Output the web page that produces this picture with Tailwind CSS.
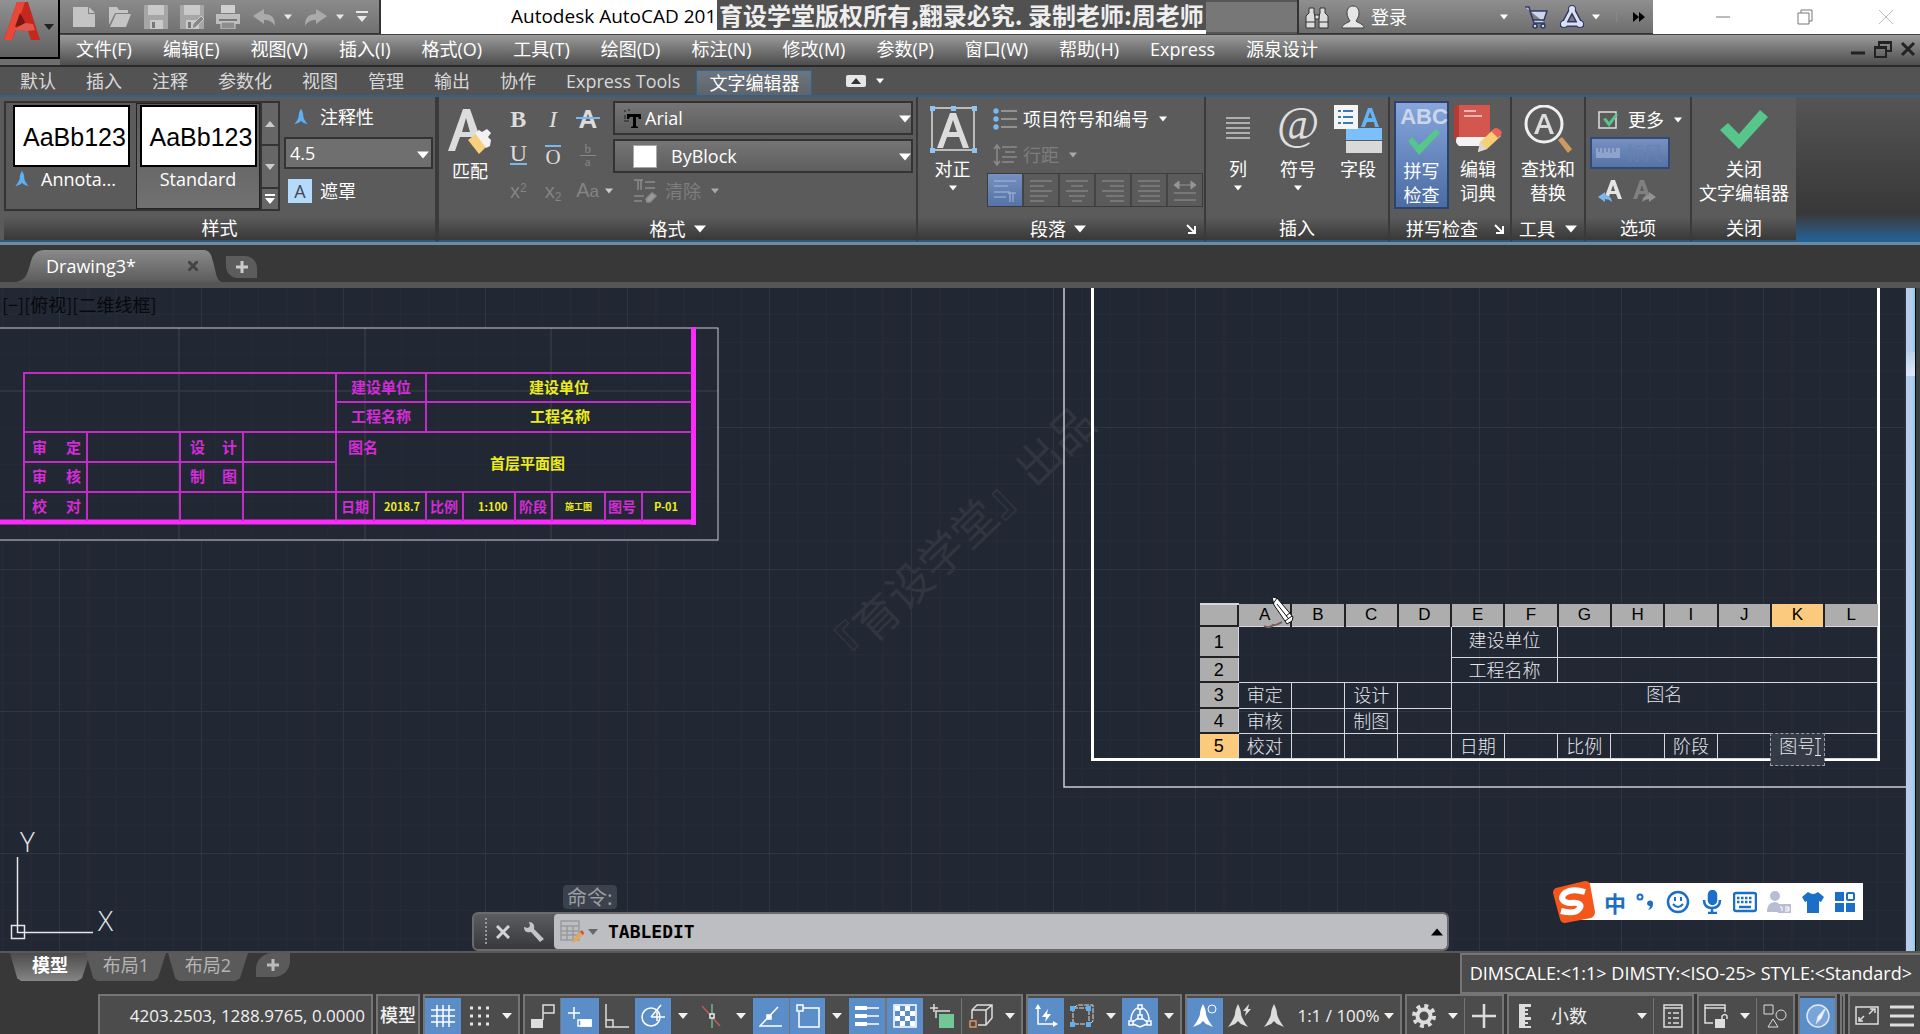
<!DOCTYPE html>
<html lang="zh-CN">

<head>
    <meta charset="UTF-8">
    <meta name="viewport" content="width=device-width, initial-scale=1.0">
    <title>Autodesk AutoCAD</title>
    <script src="https://cdn.jsdelivr.net/npm/@tailwindcss/browser@4"></script>
</head>

<body class="h-screen flex flex-col overflow-hidden bg-[#383838] text-white text-[18px] leading-6 whitespace-nowrap font-['Open_Sans','Noto_Sans_CJK_SC',sans-serif]">
    <!-- Iconos compartidos -->
    <svg class="hidden">
        <symbol id="down" viewBox="0 0 10 6"><path d="M0 0h10L5 6z" fill="currentColor"/></symbol>
        <symbol id="up" viewBox="0 0 10 6"><path d="M0 6h10L5 0z" fill="currentColor"/></symbol>
        <symbol id="anno" viewBox="0 0 24 24"><path d="M12 1c2 3 3 6 3 9 0 3 1 5 6 12l-7-3-2-2-2 2-7 3c5-7 6-9 6-12 0-3 1-6 3-9z" fill="currentColor"/></symbol>
        <symbol id="launch" viewBox="0 0 10 10"><path d="M1 1l7 7M9 2v7H2" stroke="currentColor" stroke-width="2" fill="none"/></symbol>
    </svg>

    <!-- Cabecera: logo, barra rápida, título y menú -->
    <header class="flex shrink-0 h-[67px] border-b-2 border-[#2a2a2a]">
        <div class="w-[60px] bg-[#6f6f6f] shrink-0">
            <button aria-label="AutoCAD" class="flex w-full h-[59px] items-start border-r-2 border-b-2 border-black bg-linear-to-b from-[#929292] to-[#616161]">
                <svg class="w-11 h-[42px]" viewBox="0 0 44 42"><path d="M4 40L17 2h11l12 38h-9l-3-9-12-1-4 10z" fill="#c4281f"/><path d="M17 2h8L14 34l-2 6H4z" fill="#e8473a"/><path d="M20 13l-5 14 11-3z" fill="#7a1712"/><path d="M13 30l12-7 8 1 2 6-7 1z" fill="#e2574b"/></svg>
                <svg class="w-2.5 h-1.5 mt-6 text-[#222]"><use href="#down"/></svg>
            </button>
        </div>
        <div class="flex-1 flex flex-col min-w-0">
            <div class="flex h-[34px] bg-white text-black">
                <div class="flex w-[321px] shrink-0 items-center gap-3 pl-3 pr-2 border-b border-r-2 border-[#333] bg-linear-to-b from-[#8b8b8b] to-[#717171] text-[#e8e8e8]">
                    <button aria-label="新建"><svg class="size-6" viewBox="0 0 24 24" fill="#c4c4c4"><path d="M1 2h15v7h7v13H1z"/><path d="M17 2l6 6h-6z"/></svg></button>
                    <button aria-label="打开"><svg class="size-6" viewBox="0 0 24 24" fill="#c4c4c4"><path d="M1 2h8l2 3h9v3H7L1 20z"/><path d="M8 9h15l-5 13H2z"/></svg></button>
                    <button aria-label="保存"><svg class="size-6" viewBox="0 0 24 24"><path d="M0 0h24v24H0z" fill="#a6a6a6"/><path d="M4 0h16v10H4zM6 15h13v9H6z" fill="#c9c9c9"/><path d="M8 17h3v6H8z" fill="#777"/></svg></button>
                    <button aria-label="另存为"><svg class="size-6" viewBox="0 0 24 24"><path d="M0 0h24v24H0z" fill="#a6a6a6"/><path d="M4 0h16v10H4zM6 15h13v9H6z" fill="#c9c9c9"/><path d="M8 17h3v6H8z" fill="#777"/><path d="M12 24l1-5 8-8 3 3-8 8z" fill="#888" stroke="#ccc"/></svg></button>
                    <button aria-label="打印"><svg class="size-6" viewBox="0 0 24 24"><path d="M5 0h14v8H5z" fill="#cfcfcf"/><path d="M0 9h24v10H0z" fill="#bdbdbd"/><path d="M3 14h18v2H3z" fill="#777"/><path d="M5 17h14v7H5z" fill="#8d8d8d" stroke="#ccc"/></svg></button>
                    <button aria-label="放弃" class="flex items-center gap-2"><svg class="size-6" viewBox="0 0 24 24" fill="#aaa"><path d="M1 11L12 4v5c8 0 11 4 11 12-3-5-6-6-11-6v4z"/></svg><svg class="w-2 h-1.5"><use href="#down"/></svg></button>
                    <button aria-label="重做" class="flex items-center gap-2"><svg class="size-6" viewBox="0 0 24 24" fill="#aaa"><path d="M23 11L12 4v5C4 9 1 13 1 21c3-5 6-6 11-6v4z"/></svg><svg class="w-2 h-1.5"><use href="#down"/></svg></button>
                    <button aria-label="自定义"><svg class="w-3 h-3" viewBox="0 0 12 12" fill="currentColor"><path d="M0 0h12v2H0zM1 5h10l-5 6z"/></svg></button>
                </div>
                <div class="flex flex-1 pl-[130px] text-[19px] leading-8">
                    <span class="w-[206px] shrink-0">Autodesk AutoCAD 201</span>
                    <div class="h-[30px] px-0.5 bg-[#515151] text-[#eee] text-[24px] leading-[30px] font-bold font-['Noto_Sans_CJK_SC']">育设学堂版权所有,翻录必究. 录制老师:周老师</div>
                    <div class="flex-1 bg-[#777] border-y-2 border-[#555]"></div>
                </div>
                <div class="flex w-[356px] shrink-0 items-center pl-1.5 border-l-2 border-b border-[#333] bg-linear-to-b from-[#8f8f8f] to-[#6e6e6e] text-white">
                    <svg class="size-6" viewBox="0 0 24 24" fill="#dcdcdc" stroke="#333"><path d="M4 3h5v5l1 3v12H1V11l3-3zM15 3h5v5l3 3v12h-9V11l1-3zM1 17h9M14 17h9"/><path d="M10 10h4v4h-4z"/></svg>
                    <button class="flex flex-1 items-center ml-3 gap-1.5"><svg class="size-6" viewBox="0 0 24 24" fill="#e6e6e6" stroke="#444"><path d="M12 1c4 0 6 3 6 7s-2 6-3 8c2 2 8 3 8 7H1c0-4 6-5 8-7-1-2-3-4-3-8s2-7 6-7z"/></svg>登录<svg class="w-2 h-1.5 ml-auto"><use href="#down"/></svg></button>
                    <button aria-label="应用商店" class="ml-4"><svg class="size-6" viewBox="0 0 24 24" fill="#cfd6ea" stroke="#303a66" stroke-width="1.5"><path d="M1 2h4l1 4h17l-3 9H9l1 3h11M6 6l3 9"/><circle cx="11" cy="21" r="2"/><circle cx="19" cy="21" r="2"/></svg></button>
                    <button aria-label="A360" class="flex items-center gap-2 ml-3"><svg class="size-6" viewBox="0 0 24 24" fill="none" stroke="#303a66" stroke-width="6"><path d="M12 4l8 15H4z"/><circle cx="12" cy="4" r="1"/><circle cx="4" cy="19" r="1"/><circle cx="20" cy="19" r="1"/><path d="M12 4l8 15H4z" stroke="#dbe1f2" stroke-width="3"/><g fill="#dbe1f2" stroke="none"><circle cx="12" cy="4" r="3"/><circle cx="4" cy="19" r="3"/><circle cx="20" cy="19" r="3"/></g></svg><svg class="w-2 h-1.5"><use href="#down"/></svg></button>
                    <button aria-label="更多" class="ml-4 pl-4 pr-2 border-l border-[#888] text-black"><svg class="w-3 h-2.5" viewBox="0 0 12 10"><path d="M0 0l6 5-6 5zM6 0l6 5-6 5z"/></svg></button>
                </div>
                <div class="flex w-[267px] shrink-0 items-center justify-between pl-[62px] pr-[26px] text-[#777]">
                    <button aria-label="最小化"><svg class="size-4" viewBox="0 0 16 16"><path d="M1 8h14" stroke="currentColor"/></svg></button>
                    <button aria-label="还原"><svg class="size-4" viewBox="0 0 16 16" fill="none" stroke="currentColor"><path d="M1 4h11v11H1zM4 4V1h11v11h-3"/></svg></button>
                    <button aria-label="关闭"><svg class="size-4 text-[#bbb]" viewBox="0 0 16 16"><path d="M1 1l14 14M15 1L1 15" stroke="currentColor"/></svg></button>
                </div>
            </div>
            <nav class="flex flex-1 items-center gap-[31px] pl-4 pr-1 pb-0.5 border-t border-[#444] bg-linear-to-b from-[#9b9b9b] to-[#4e4e4e]">
                <a href="#">文件(F)</a>
                <a href="#">编辑(E)</a>
                <a href="#">视图(V)</a>
                <a href="#">插入(I)</a>
                <a href="#">格式(O)</a>
                <a href="#">工具(T)</a>
                <a href="#">绘图(D)</a>
                <a href="#">标注(N)</a>
                <a href="#">修改(M)</a>
                <a href="#">参数(P)</a>
                <a href="#">窗口(W)</a>
                <a href="#">帮助(H)</a>
                <a href="#">Express</a>
                <a href="#">源泉设计</a>
                <div class="flex ml-auto gap-2 items-center">
                    <button aria-label="最小化"><svg class="size-4" viewBox="0 0 16 16"><path d="M1 12h14" stroke="#222" stroke-width="3"/></svg></button>
                    <button aria-label="还原"><svg class="size-4.5" viewBox="0 0 18 18" fill="none" stroke="#222" stroke-width="2"><path d="M1 7h11v10H1zM5 6V2h12v9h-4M5 3h12M1 8h11"/></svg></button>
                    <button aria-label="关闭"><svg class="size-4" viewBox="0 0 16 16"><path d="M2 2l12 12M14 2L2 14" stroke="#222" stroke-width="3"/></svg></button>
                </div>
            </nav>
        </div>
    </header>

    <!-- Pestañas de la cinta -->
    <nav class="flex shrink-0 h-7 items-center gap-[30px] pl-5 bg-[#535353] text-[#d8d8d8]">
        <a href="#">默认</a>
        <a href="#">插入</a>
        <a href="#">注释</a>
        <a href="#">参数化</a>
        <a href="#">视图</a>
        <a href="#">管理</a>
        <a href="#">输出</a>
        <a href="#">协作</a>
        <a href="#">Express Tools</a>
        <a href="#" class="-ml-3.5 mt-0.5 px-3 border border-b-0 border-[#2f6391] bg-linear-to-b from-[#6c7680] to-[#5e646a] text-white">文字编辑器</a>
        <button aria-label="最小化功能区" class="flex items-center gap-2.5 ml-1"><svg class="w-5 h-3" viewBox="0 0 20 12"><rect width="20" height="12" rx="2" fill="#e6e6e6"/><path d="M5 9h10l-5-6z" fill="#333"/></svg><svg class="w-2 h-1.5 text-white"><use href="#down"/></svg></button>
    </nav>

    <!-- Cinta: editor de texto -->
    <div class="flex shrink-0 h-[150px] border-t-2 border-b-3 border-t-[#335f89] border-b-[#6d8ba0] bg-[#2a2a2a]">
        <section class="flex flex-col w-[437px] shrink-0 pl-1 border-r-2 border-b-2 border-[#2f587c] border-r-[#3a3a3a] bg-[#5b5b5b]">
            <div class="flex flex-1 pt-1">
                <div class="flex w-[276px] h-[110px] border-2 border-[#333]">
                    <button class="flex flex-col w-[130px] pt-0.5 pl-[7px]">
                        <span class="w-[117px] h-[62px] pl-2 border-2 border-black bg-white text-black text-[25px] leading-[60px] text-left overflow-hidden font-['Liberation_Sans']">AaBb123</span>
                        <span class="flex items-center gap-2.5 h-6"><svg class="size-[18px] text-[#5cb0f5]"><use href="#anno"/></svg>Annota...</span>
                    </button>
                    <button class="flex flex-col items-center w-[124px] pt-px border border-[#222] bg-linear-to-b from-[#5b5b5b] to-[#717171]">
                        <span class="w-[117px] h-[62px] pl-2 border-2 border-black bg-white text-black text-[25px] leading-[60px] text-left overflow-hidden font-['Liberation_Sans']">AaBb123</span>
                        <span class="h-6">Standard</span>
                    </button>
                    <div class="flex flex-col flex-1 border-l-2 border-[#333] bg-[#666]">
                        <button aria-label="上" class="flex flex-1 items-center justify-center border-b-2 border-[#333] text-[#ccc]"><svg class="w-2.5 h-1.5"><use href="#up"/></svg></button>
                        <button aria-label="下" class="flex flex-1 items-center justify-center border-b-2 border-[#333] text-[#ccc]"><svg class="w-2.5 h-1.5"><use href="#down"/></svg></button>
                        <button aria-label="展开" class="flex h-5 items-center justify-center"><svg class="w-2.5 h-2.5" viewBox="0 0 10 10"><path d="M0 0h10v2H0zM0 4h10l-5 6z" fill="#fff"/></svg></button>
                    </div>
                </div>
                <div class="flex flex-col ml-1 gap-1">
                    <button class="flex items-center gap-2.5 h-8 pl-2"><svg class="size-[18px] text-[#5cb0f5]"><use href="#anno"/></svg>注释性</button>
                    <div class="relative">
                        <select aria-label="文字高度" class="w-[149px] h-8 pl-1 leading-7 appearance-none border-2 border-[#333] bg-[#6f6f6f]">
                            <option>4.5</option>
                        </select>
                        <svg class="absolute right-1 top-3.5 w-3 h-2 pointer-events-none"><use href="#down"/></svg>
                    </div>
                    <button class="flex items-center gap-2 mt-1.5 pl-1"><span class="size-6 bg-[#b4dbfb] text-[#445] leading-6">A</span>遮罩</button>
                </div>
            </div>
            <h3 class="h-[23px] text-center leading-[23px] bg-linear-to-b from-[#5b5b5b] to-[#383838]">样式</h3>
        </section>

        <section class="flex flex-col w-[481px] shrink-0 border-x-2 border-b-2 border-[#2f587c] border-x-[#3a3a3a] bg-[#5b5b5b]">
            <div class="flex flex-1 pt-1">
                <button class="flex flex-col items-center w-[62px] pt-2 pb-6">
                    <svg class="w-11 h-[46px] mb-1" viewBox="0 0 44 46"><path d="M0 42L15 0h7l12 34-5 8-5-14H12L7 42zM14 23h8L18 9z" fill="#dcdcdc" fill-rule="evenodd"/><path d="M20 31l8-6 11 12-8 8z" fill="#f8cf7c"/><path d="M27 24l4-3 3 2 5-3 4 4-3 4 3 3-1 6-4 2z" fill="#f2f2f2"/></svg>
                    <span>匹配</span>
                </button>
                <div class="grid grid-cols-3 w-[104px] content-start text-[#dcdcdc] text-[24px] font-['Liberation_Serif']">
                    <button aria-label="粗体" class="h-9 font-bold">B</button>
                    <button aria-label="斜体" class="h-9 italic">I</button>
                    <button aria-label="删除线" class="h-9 flex justify-center items-center"><svg class="size-6 overflow-visible" viewBox="0 0 24 24"><text x="12" y="21" text-anchor="middle" font-size="26" font-weight="bold" fill="#dcdcdc" font-family="Liberation Sans">A</text><path d="M0 11h24" stroke="#78b8ee" stroke-width="2"/></svg></button>
                    <button aria-label="下划线" class="flex justify-center items-center h-9"><span class="h-5 leading-4 border-b-2 border-[#78b8ee]">U</span></button>
                    <button aria-label="上划线" class="flex justify-center items-center h-9"><span class="h-5 leading-5 border-t-2 border-[#78b8ee] text-[21px]">O</span></button>
                    <button aria-label="堆叠" class="flex flex-col justify-center items-center h-9 text-[13px] leading-3 text-[#888]"><span class="w-4 border-b border-[#888]">b</span><span>a</span></button>
                    <button class="h-9 leading-7 text-[#848484] font-['Liberation_Sans'] text-[20px]">x<sup class="text-[12px] leading-none">2</sup></button>
                    <button class="h-9 leading-7 text-[#848484] font-['Liberation_Sans'] text-[20px]">x<sub class="text-[12px] leading-none">2</sub></button>
                    <button class="h-9 leading-7 text-[#848484] font-['Liberation_Sans'] text-[20px]">A<span class="text-[17px]">a</span></button>
                </div>
                <div class="flex flex-col gap-1">
                    <div class="relative ml-2">
                        <select aria-label="字体" class="w-[300px] h-[34px] pl-[30px] leading-[30px] appearance-none border-2 border-[#333] bg-linear-to-b from-[#757575] to-[#5e5e5e]">
                            <option>Arial</option>
                        </select>
                        <svg class="absolute left-2.5 top-2 w-[18px] h-[20px]" viewBox="0 0 18 20"><path d="M1 2h2M5 1h2M2 6v4M1 12h5" stroke="#444" stroke-width="2"/><path d="M4 5h14v5h-2l-1-2h-2v9l2 1v1H8v-1l2-1V8H7l-1 2H4z"/></svg>
                        <svg class="absolute right-0.5 top-3.5 w-3 h-2 pointer-events-none"><use href="#down"/></svg>
                    </div>
                    <div class="relative ml-2">
                        <select aria-label="颜色" class="w-[300px] h-[34px] pl-[56px] leading-[30px] appearance-none border-2 border-[#333] bg-linear-to-b from-[#757575] to-[#5e5e5e]">
                            <option>ByBlock</option>
                        </select>
                        <span class="absolute left-5 top-1.5 w-6 h-[23px] bg-white border border-[#aaa]"></span>
                        <svg class="absolute right-0.5 top-3.5 w-3 h-2 pointer-events-none"><use href="#down"/></svg>
                    </div>
                    <button class="flex items-center h-7 text-[#7e7e7e]"><svg class="w-2 h-1.5 mr-5 text-[#ccc]"><use href="#down"/></svg><svg class="size-6 mr-2" viewBox="0 0 24 24" stroke="#8c8c8c" stroke-width="1.500" fill="none"><path d="M1 1h9M5 1v10M8 1v10M12 3h10M12 9h10M1 17h10M1 22h8"/><path d="M13 20l6-6 4 3-6 6h-3z" fill="#999"/></svg>清除<svg class="w-2 h-1.5 ml-2.5 text-[#aaa]"><use href="#down"/></svg></button>
                </div>
            </div>
            <h3 class="flex items-center justify-center gap-2 h-[23px] bg-linear-to-b from-[#5b5b5b] to-[#383838]">格式<svg class="w-3 h-2"><use href="#down"/></svg></h3>
        </section>

        <section class="flex flex-col w-[288px] shrink-0 border-r-2 border-b-2 border-[#2f587c] border-r-[#3a3a3a] bg-[#5b5b5b]">
            <div class="flex flex-1 pt-1">
                <button class="flex flex-col items-center w-[69px] pt-1">
                    <svg class="w-12 h-12 mb-1" viewBox="0 0 48 48"><path d="M3 3h42v42H3z" fill="none" stroke="#ddd" stroke-width="1.500"/><path d="M8 43L21 8h6l13 35h-6l-4-11H18l-4 11zM20 27h8l-4-12z" fill="#dcdcdc" fill-rule="evenodd"/><path d="M1 1h5v5H1zM22 1h5v5h-5zM43 1h5v5h-5zM1 43h5v5H1zM43 43h5v5h-5z" fill="#8cc4f5"/></svg>
                    <span>对正</span>
                    <svg class="w-2 h-1.5 mt-1"><use href="#down"/></svg>
                </button>
                <div class="flex flex-col">
                    <button class="flex items-center gap-1.5 h-9 pl-1.5"><svg class="size-6" viewBox="0 0 24 24" stroke="#ccc"><path d="M8 4h16M8 12h16M8 20h16"/><g fill="#78b8ee" stroke="none"><circle cx="3" cy="4" r="2.700"/><circle cx="3" cy="12" r="2.700"/><circle cx="3" cy="20" r="2.700"/></g></svg>项目符号和编号<svg class="w-2 h-1.5 ml-1"><use href="#down"/></svg></button>
                    <button class="flex items-center gap-1.5 h-9 pl-1.5 text-[#7e7e7e]"><svg class="size-6" viewBox="0 0 24 24" stroke="#8c8c8c" stroke-width="1.500" fill="none"><path d="M4 2v20M1 6l3-4 3 4M1 18l3 4 3-4M9 4h15M12 9h10M9 14h15M9 19h12"/></svg>行距<svg class="w-2 h-1.5 ml-1 text-[#aaa]"><use href="#down"/></svg></button>
                    <div class="flex border border-[#3c3c3c] divide-x-2 divide-[#444] text-[#959595]">
                        <button aria-label="默认" class="p-1 px-[5px] bg-linear-to-b from-[#7690c0] to-[#5573a6]"><svg class="size-6" viewBox="0 0 24 24" stroke="#a9bbdb"><path d="M1 3h22M1 8h14M1 14h16M1 19h12M17 15v9M20 15v9M23 15h-8"/></svg></button>
                        <button aria-label="左对齐" class="p-1 px-[5px]"><svg class="size-6" viewBox="0 0 24 24" stroke="currentColor"><path d="M1 3h22M1 8h14M1 13h22M1 18h18M1 23h14"/></svg></button>
                        <button aria-label="居中" class="p-1 px-[5px]"><svg class="size-6" viewBox="0 0 24 24" stroke="currentColor"><path d="M1 3h22M6 8h12M1 13h22M4 18h16M7 23h10"/></svg></button>
                        <button aria-label="右对齐" class="p-1 px-[5px]"><svg class="size-6" viewBox="0 0 24 24" stroke="currentColor"><path d="M1 3h22M9 8h14M1 13h22M5 18h18M9 23h14"/></svg></button>
                        <button aria-label="对正" class="p-1 px-[5px]"><svg class="size-6" viewBox="0 0 24 24" stroke="currentColor"><path d="M1 3h22M3 8h20M1 13h22M3 18h20M1 23h22"/></svg></button>
                        <button aria-label="分散对齐" class="p-1 px-[5px]"><svg class="size-6" viewBox="0 0 24 24" stroke="currentColor" fill="currentColor"><path d="M2 7h20M1 15h22M1 22h22"/><path d="M6 3L1 7l5 4zM18 3l5 4-5 4z"/></svg></button>
                    </div>
                </div>
            </div>
            <h3 class="flex items-center h-[23px] pl-3 pr-2 bg-linear-to-b from-[#5b5b5b] to-[#383838]"><span class="ml-auto mr-2">段落</span><svg class="w-3 h-2"><use href="#down"/></svg><svg class="size-2.5 ml-auto"><use href="#launch"/></svg></h3>
        </section>

        <section class="flex flex-col w-[184px] shrink-0 border-r-2 border-b-2 border-[#2f587c] border-r-[#3a3a3a] bg-[#5b5b5b]">
            <div class="grid grid-cols-3 flex-1 pt-2 pl-0.5">
                <button class="flex flex-col items-center">
                    <svg class="w-6 h-12 mb-1" viewBox="0 0 24 48" stroke="#ccc" stroke-width="1.500"><path d="M0 13h24M0 18h24M0 23h24M0 28h24M0 33h24"/></svg>
                    <span>列</span>
                    <svg class="w-2 h-1.5 mt-1"><use href="#down"/></svg>
                </button>
                <button class="flex flex-col items-center">
                    <svg class="w-12 h-12 mb-1 overflow-visible" viewBox="0 0 48 48"><text x="24" y="34" text-anchor="middle" font-size="46" font-style="italic" fill="#dedede" font-family="Liberation Serif">@</text></svg>
                    <span>符号</span>
                    <svg class="w-2 h-1.5 mt-1"><use href="#down"/></svg>
                </button>
                <button class="flex flex-col items-center">
                    <svg class="w-12 h-12 mb-1" viewBox="0 0 48 48"><path d="M12 23h36v12H12z" fill="#7cc0fb"/><path d="M12 36h36v12H12z" fill="#d9d9d9"/><path d="M0 0h24v24H0z" fill="#f4f4f4"/><path d="M9 6h10M9 12h10M9 18h10M4 6h3M4 12h3M4 18h3" stroke="#3b78b4" stroke-width="2"/><path d="M27 22l7-19h4l7 19h-4l-1-5h-7l-2 5zM34 13h4l-2-6z" fill="#63b3f6" fill-rule="evenodd"/></svg>
                    <span>字段</span>
                </button>
            </div>
            <h3 class="h-[23px] text-center leading-[23px] bg-linear-to-b from-[#5b5b5b] to-[#383838]">插入</h3>
        </section>

        <section class="flex flex-col w-[122px] shrink-0 border-r-2 border-b-2 border-[#2f587c] border-r-[#3a3a3a] bg-[#5b5b5b]">
            <div class="flex flex-1 pt-1 pl-1">
                <button class="flex flex-col items-center w-[55px] h-[108px] pt-1.5 border-2 border-[#2c4370] bg-linear-to-b from-[#86a6dd] to-[#4b6ba3]">
                    <svg class="w-12 h-12 mb-0.5 overflow-visible" viewBox="0 0 48 48"><text x="26" y="15" text-anchor="middle" font-size="22" font-weight="bold" fill="#ccd6ea" font-family="Liberation Sans">ABC</text><path d="M10 32l4-4 7 8 17-16 4 4-21 22z" fill="#56c68a"/></svg>
                    <span>拼写</span>
                    <span>检查</span>
                </button>
                <button class="flex flex-col items-center w-[58px] pt-1">
                    <svg class="w-12 h-12 mb-1" viewBox="0 0 48 48"><path d="M2 4q0-4 5-4h29v34H2z" fill="#d3574f"/><path d="M0 5q0-5 5-5v34H0z" fill="#b53b35"/><path d="M10 6h12M10 11h18" stroke="#f3d5d3" stroke-width="1.500"/><path d="M3 32h31v9H5q-5-4-2-9z" fill="#f3f3f3"/><path d="M24 47l2-10 14-13 7 7-14 13z" fill="#f8cf74"/><path d="M24 47l2-10 7 7z" fill="#d8d8d8"/><path d="M37 26l4-3q5 0 7 5l-4 5z" fill="#ee6258"/></svg>
                    <span>编辑</span>
                    <span>词典</span>
                </button>
            </div>
            <h3 class="flex items-center justify-between h-[23px] pl-4 pr-1.5 bg-linear-to-b from-[#5b5b5b] to-[#383838]">拼写检查<svg class="size-2.5"><use href="#launch"/></svg></h3>
        </section>

        <section class="flex flex-col w-[74px] shrink-0 border-r-2 border-b-2 border-[#2f587c] border-r-[#3a3a3a] bg-[#5b5b5b]">
            <button class="flex flex-col items-center flex-1 pt-2">
                <svg class="w-12 h-12 mb-1" viewBox="0 0 48 48"><path d="M34 35l4-3 10 12-4 4z" fill="#cf9a5e"/><circle cx="20" cy="19" r="18" fill="none" stroke="#f0f0f0" stroke-width="3"/><path d="M10 29L18 9h4l8 20h-4l-2-6h-8l-2 6zM17 20h6l-3-8z" fill="#dcdcdc" fill-rule="evenodd"/></svg>
                <span>查找和</span>
                <span>替换</span>
            </button>
            <h3 class="flex items-center justify-center gap-2.5 h-[23px] bg-linear-to-b from-[#5b5b5b] to-[#383838]">工具<svg class="w-3 h-2"><use href="#down"/></svg></h3>
        </section>

        <section class="flex flex-col w-[106px] shrink-0 border-r-2 border-b-2 border-[#2f587c] border-r-[#3a3a3a] bg-[#5b5b5b]">
            <div class="flex flex-col flex-1 pt-1.5 pl-1">
                <button class="flex items-center gap-2.5 h-[34px] pl-2"><svg class="w-5 h-[18px]" viewBox="0 0 20 18"><path d="M1 1h17v16H1z" fill="none" stroke="#ddd" stroke-width="1.500"/><path d="M5 8l3-1 3 4 7-9 2 2-9 12z" fill="#56c68a"/></svg>更多<svg class="w-2 h-1.5"><use href="#down"/></svg></button>
                <button class="flex items-center gap-1.5 w-20 h-8 pl-1 border-2 border-[#324a78] bg-linear-to-b from-[#7690c0] to-[#5573a6] text-[#6782b0]"><svg class="w-6 h-2.5" viewBox="0 0 24 10"><path d="M0 0h24v10H0z" fill="#8fa4ca"/><path d="M3 0v4M7 0v5M11 0v4M15 0v5M19 0v4" stroke="#5573a6"/></svg>标尺</button>
                <div class="flex gap-2.5 mt-2.5 pl-2">
                    <button aria-label="放弃"><svg class="size-6" viewBox="0 0 24 24"><path d="M6 20L13 1h4l7 19h-4l-2-5h-6l-2 5zM13 12h4l-2-6z" fill="#e4e4e4" fill-rule="evenodd"/><path d="M0 18l7-5v3q6 0 7 7-3-3-7-3v3z" fill="#78b8ee"/></svg></button>
                    <button aria-label="重做"><svg class="size-6" viewBox="0 0 24 24"><path d="M1 20L8 1h4l7 19h-4l-2-5H7l-2 5zM8 12h4l-2-6z" fill="#808080" fill-rule="evenodd"/><path d="M24 18l-7-5v3q-6 0-7 7 3-3 7-3v3z" fill="#929292"/></svg></button>
                </div>
            </div>
            <h3 class="h-[23px] text-center leading-[23px] bg-linear-to-b from-[#5b5b5b] to-[#383838]">选项</h3>
        </section>

        <section class="flex flex-col w-[104px] shrink-0 border-b-2 border-[#2f587c] bg-[#5b5b5b]">
            <button class="flex flex-col items-center flex-1 pt-2">
                <svg class="w-12 h-12 mb-1" viewBox="0 0 48 48"><path d="M0 25l8-7 11 11L40 5l8 7-29 32z" fill="#56c68a"/></svg>
                <span>关闭</span>
                <span>文字编辑器</span>
            </button>
            <h3 class="h-[23px] text-center leading-[23px] bg-linear-to-b from-[#5b5b5b] to-[#383838]">关闭</h3>
        </section>
        <div class="flex-1 bg-linear-to-b from-[#555] via-[#383838] via-80% to-[#1d639b]"></div>
    </div>

    <!-- Pestañas de archivo -->
    <div class="flex shrink-0 items-end h-[43px] pl-4 border-b-6 border-[#555] bg-[#383838]">
        <div class="relative flex items-center w-[206px] h-[33px] pl-[30px]">
            <svg class="absolute inset-0 w-full h-full" viewBox="0 0 206 33" preserveAspectRatio="none"><defs><linearGradient id="tab" x2="0" y2="1"><stop stop-color="#8a8a8a"/><stop offset="1" stop-color="#5c5c5c"/></linearGradient></defs><path d="M0 33C10 31 11 26 15 12Q18 1 28 1H188Q194 1 196 9C200 22 200 32 206 33z" fill="url(#tab)"/></svg>
            <a href="#" class="relative">Drawing3*</a>
            <button aria-label="关闭" class="relative ml-auto mr-6"><svg class="size-2.5" viewBox="0 0 10 10"><path d="M0 0l10 10M10 0L0 10" stroke="#444" stroke-width="3"/></svg></button>
        </div>
        <button aria-label="新图形" class="flex items-center justify-center w-[31px] h-[22px] mb-1 ml-1 rounded-tr-xl rounded-bl-xl bg-[#5c5c5c]"><svg class="size-3" viewBox="0 0 12 12"><path d="M6 0v12M0 6h12" stroke="#ccc" stroke-width="3"/></svg></button>
    </div>

    <!-- Lienzo de dibujo -->
    <main class="relative flex-1 overflow-hidden bg-[#212733]">
        <svg class="absolute inset-0 w-full h-full" font-family="Noto Sans CJK SC">
            <defs>
                <pattern id="grid" x="59" y="139" width="142" height="142" patternUnits="userSpaceOnUse">
                    <path d="M28.900 0v142M57.300 0v142M85.700 0v142M114.100 0v142M0 28.900h142M0 57.300h142M0 85.700h142M0 114.100h142" stroke="#262c38"/>
                    <path d="M.5 0v142M0 .5h142" stroke="#2f3642"/>
                </pattern>
                <pattern id="grid2" x="178" y="102" width="186" height="186" patternUnits="userSpaceOnUse">
                    <path d="M37.500 0v186M74.500 0v186M111.500 0v186M149.500 0v186M0 37.500h186M0 74.500h186M0 111.500h186M0 149.500h186" stroke="#252b36"/>
                    <path d="M1 0v186M0 1h186" stroke="#2f3540" stroke-width="2"/>
                </pattern>
            </defs>
            <rect width="100%" height="100%" fill="url(#grid)"/>

            <text transform="translate(840 388) rotate(-44)" font-size="45" fill="#30353f">『育设学堂』出品</text>

            <!-- Cajetín de referencia -->
            <rect x="-2" y="40" width="720" height="212" fill="#212733"/>
            <rect x="-2" y="40" width="720" height="212" fill="url(#grid2)" stroke="#c8ccd2"/>
            <path d="M0 234H694M693.500 39V237" stroke="#fb2bfb" stroke-width="5"/>
            <path d="M24 85H692M336 114H692M24 144H692M24 174H336M24 204H692M24 84V233M87 144V233M180 144V233M243 144V233M336 85V233M426 85V144M374 204V233M426 204V233M463 204V233M515 204V233M552 204V233M605 204V233M642 204V233" stroke="#c22bc5" stroke-width="2"/>
            <g font-size="15" font-weight="bold" fill="#d32bd6">
                <text x="351" y="105">建设单位</text>
                <text x="351" y="134">工程名称</text>
                <text x="348" y="165">图名</text>
                <text x="32" y="165">审</text><text x="66" y="165">定</text>
                <text x="32" y="194">审</text><text x="66" y="194">核</text>
                <text x="32" y="224">校</text><text x="66" y="224">对</text>
                <text x="190" y="165">设</text><text x="222" y="165">计</text>
                <text x="190" y="194">制</text><text x="222" y="194">图</text>
                <text x="341" y="224" font-size="14">日期</text>
                <text x="430" y="224" font-size="14">比例</text>
                <text x="519" y="224" font-size="14">阶段</text>
                <text x="608" y="224" font-size="14">图号</text>
            </g>
            <g font-size="15" font-weight="bold" fill="#ecec1c">
                <text x="529" y="105">建设单位</text>
                <text x="530" y="134">工程名称</text>
                <text x="490" y="181">首层平面图</text>
                <text x="384" y="223" font-size="11">2018.7</text>
                <text x="478" y="223" font-size="11">1:100</text>
                <text x="565" y="222" font-size="9">施工图</text>
                <text x="654" y="223" font-size="11">P-01</text>
            </g>

            <!-- Marco de la lámina -->
            <path d="M1064 0V499H1906" fill="none" stroke="#c8ccd2" stroke-width="1.500"/>
            <path d="M1092.500 0V471.500H1878.500V0" fill="none" stroke="#fff" stroke-width="3"/>

            <!-- Icono SCP -->
            <path d="M11.500 637.500h13v13h-13zM17.500 569V644.500H93" fill="none" stroke="#e4e6ea" stroke-width="1.500"/>
            <g font-family="Open Sans" font-weight="300" font-size="28" fill="#e4e6ea">
                <text x="20" y="564">Y</text>
                <text x="98" y="643">X</text>
            </g>
        </svg>

        <button class="absolute left-0.5 top-1 text-[#07090d] font-['Noto_Sans_CJK_SC']">[−][俯视][二维线框]</button>

        <table class="absolute left-[1200px] top-[315px] w-[678px] table-fixed border-collapse text-center leading-5 font-light text-[#e6e8ec] font-['Noto_Sans_CJK_SC']">
            <colgroup><col class="w-[38px]"><col span="12"></colgroup>
            <thead class="bg-[#adadad] text-black font-['Liberation_Sans'] text-[17px]">
                <tr class="h-[22px]">
                    <th class="border-t-2 border-[#d5d7e0]"></th>
                    <th class="font-normal border-l-2 border-[#222]">A</th>
                    <th class="font-normal border-l-2 border-[#222]">B</th>
                    <th class="font-normal border-l-2 border-[#222]">C</th>
                    <th class="font-normal border-l-2 border-[#222]">D</th>
                    <th class="font-normal border-l-2 border-[#222]">E</th>
                    <th class="font-normal border-l-2 border-[#222]">F</th>
                    <th class="font-normal border-l-2 border-[#222]">G</th>
                    <th class="font-normal border-l-2 border-[#222]">H</th>
                    <th class="font-normal border-l-2 border-[#222]">I</th>
                    <th class="font-normal border-l-2 border-[#222]">J</th>
                    <th class="font-normal border-l-2 border-[#222] bg-[#fcca7c]">K</th>
                    <th class="font-normal border-l-2 border-[#222]">L</th>
                </tr>
            </thead>
            <tbody>
                <tr class="h-[31px]">
                    <th class="font-normal bg-[#adadad] text-black border-y-2 border-y-[#222] font-['Liberation_Sans']">1</th>
                    <td class="border border-[#d5d8de]" colspan="4" rowspan="2"></td>
                    <td class="border border-[#d5d8de] pb-1.5" colspan="2">建设单位</td>
                    <td class="border border-[#d5d8de]" colspan="6"></td>
                </tr>
                <tr class="h-[25px]">
                    <th class="font-normal bg-[#adadad] text-black border-y-2 border-y-[#222] font-['Liberation_Sans']">2</th>
                    <td class="border border-[#d5d8de] pb-0.5" colspan="2">工程名称</td>
                    <td class="border border-[#d5d8de]" colspan="6"></td>
                </tr>
                <tr class="h-[26px]">
                    <th class="font-normal bg-[#adadad] text-black border-y-2 border-y-[#222] font-['Liberation_Sans']">3</th>
                    <td class="border border-[#d5d8de] pb-0.5">审定</td>
                    <td class="border border-[#d5d8de]"></td>
                    <td class="border border-[#d5d8de] pb-0.5">设计</td>
                    <td class="border border-[#d5d8de]"></td>
                    <td class="border border-[#d5d8de] align-top" colspan="8" rowspan="2">图名</td>
                </tr>
                <tr class="h-[25px]">
                    <th class="font-normal bg-[#adadad] text-black border-y-2 border-y-[#222] font-['Liberation_Sans']">4</th>
                    <td class="border border-[#d5d8de] pb-0.5">审核</td>
                    <td class="border border-[#d5d8de]"></td>
                    <td class="border border-[#d5d8de] pb-0.5">制图</td>
                    <td class="border border-[#d5d8de]"></td>
                </tr>
                <tr class="h-[25px]">
                    <th class="font-normal bg-[#fcca7c] text-black font-['Liberation_Sans']">5</th>
                    <td class="border border-[#d5d8de] pb-0.5">校对</td>
                    <td class="border border-[#d5d8de]"></td>
                    <td class="border border-[#d5d8de]"></td>
                    <td class="border border-[#d5d8de]"></td>
                    <td class="border border-[#d5d8de] pb-0.5">日期</td>
                    <td class="border border-[#d5d8de]"></td>
                    <td class="border border-[#d5d8de] pb-0.5">比例</td>
                    <td class="border border-[#d5d8de]"></td>
                    <td class="border border-[#d5d8de] pb-0.5">阶段</td>
                    <td class="border border-[#d5d8de]"></td>
                    <td class="border border-[#d5d8de] relative">
                        <input aria-label="单元格 K5" value="图号" class="absolute -left-px -top-px w-[55px] h-[33px] pl-2 pb-2 border border-dashed border-[#9a9fa8] bg-[#343a46]">
                        <svg class="absolute left-[43px] top-1 w-2 h-[18px]" viewBox="0 0 8 18"><path d="M1 .5h6M1 17.500h6M4 0v18" stroke="#e6e8ec"/></svg>
                    </td>
                    <td class="border border-[#d5d8de]"></td>
                </tr>
            </tbody>
        </table>

        <!-- Cursor de lápiz -->
        <svg class="absolute left-[1262px] top-[307px] w-8 h-9" viewBox="0 0 32 36"><path d="M2 31q5 3 9-1 2 1 9-3" fill="none" stroke="#7c5a5a" stroke-width="2"/><path d="M10 2l5 1 16 19-1 4-5 3L12 10z" fill="#fff" stroke="#111"/><path d="M15 3l-4 6M24 21l5-4M23 26l7-5M15 9l11 14" stroke="#111" fill="none"/></svg>

        <!-- Barra lateral derecha -->
        <div class="absolute right-0 inset-y-0 flex w-3.5 bg-[#3c4040]">
            <div class="w-2.5 bg-linear-to-r from-[#b7cdec] from-70% to-[#6fd0f0] border-r border-black"><div class="h-6 mt-16 bg-linear-to-b from-[#bcd2ef] to-[#dce8f7]"></div></div>
        </div>

        <!-- Línea de comandos -->
        <span class="absolute left-[563px] bottom-[42px] px-1 h-6 rounded bg-[#3b424c] text-[#9a9fa6] text-[20px] font-['Noto_Sans_CJK_SC']">命令:</span>
        <div class="absolute left-[472px] bottom-0 flex w-[977px] h-[39px] border-2 border-[#6b6b6d] rounded-md overflow-hidden bg-linear-to-b from-[#5b5d60] to-[#38393c]">
            <div class="flex items-center w-[80px] pl-2.5 gap-2">
                <svg class="w-1 h-7" viewBox="0 0 4 28"><path d="M2 0v28" stroke="#999" stroke-width="2" stroke-dasharray="2 2"/></svg>
                <button aria-label="关闭"><svg class="size-3.5" viewBox="0 0 14 14"><path d="M1 1l12 12M13 1L1 13" stroke="#d4d4d4" stroke-width="3"/></svg></button>
                <button aria-label="自定义" class="ml-1.5"><svg class="size-5" viewBox="0 0 20 20" fill="#c4c4c4"><path d="M5 0l1 4-2 2-4-1c0 5 4 6 7 5l9 10 4-3L10 7c1-4-1-7-5-7z"/></svg></button>
            </div>
            <div class="flex flex-1 items-center pl-1.5 pr-1 rounded bg-[#bdbec1] text-black">
                <svg class="w-6 h-6" viewBox="0 0 24 24" fill="none" stroke="#9a9a9c" stroke-width="1.500"><path d="M1 1h18v19H1zM1 6h18M1 11h18M1 15h18M7 6v14M13 6v14"/><path d="M12 23l2-5 7-7 3 3-7 7z" fill="#e2a95a" stroke="none"/><path d="M20 12l2-2 2 3-1 2z" fill="#d6453c" stroke="none"/></svg>
                <svg class="w-2.5 h-1.5 ml-1 text-[#666]"><use href="#down"/></svg>
                <input aria-label="命令行" value="TABLEDIT" class="flex-1 ml-2.5 font-bold text-[18px] font-['DejaVu_Sans_Mono'] outline-none">
                <button aria-label="历史记录"><svg class="w-3 h-2"><use href="#up"/></svg></button>
            </div>
        </div>

        <!-- Barra del método de entrada -->
        <div class="absolute left-[1552px] bottom-[31px] flex items-center w-[311px] h-[37px] text-[#1c6fc6]">
            <div class="absolute inset-y-0 right-0 left-6 bg-white"></div>
            <svg class="relative w-11 h-11 shrink-0" viewBox="0 0 44 44"><path d="M4 8L33 1q4 0 5 3l5 28q0 4-4 6l-26 5q-4 0-5-4L1 13q0-4 3-5z" fill="#f4571c"/><path d="M33 12Q20 8 13 13c-6 5-2 10 6 10 8-1 12 2 8 6-3 4-10 4-18 2" fill="none" stroke="#fff" stroke-width="6"/></svg>
            <div class="relative flex flex-1 items-center justify-between pl-2 pr-2">
                <button class="text-[22px] font-bold font-['Noto_Sans_CJK_SC']">中</button>
                <button aria-label="标点"><svg class="w-5 h-5" viewBox="0 0 20 20"><circle cx="4" cy="5" r="2.500" fill="none" stroke="currentColor" stroke-width="2"/><path d="M11 11a3 3 0 1 1 6 1q0 5-5 6 2-2 2-4-3 0-3-3z" fill="currentColor"/></svg></button>
                <button aria-label="表情"><svg class="size-6" viewBox="0 0 24 24" fill="none" stroke="currentColor" stroke-width="2.500"><circle cx="12" cy="12" r="10"/><path d="M9 7v4M15 7v4M7 14q5 6 10 0" stroke-width="2"/></svg></button>
                <button aria-label="语音"><svg class="size-6" viewBox="0 0 24 24" fill="none" stroke="currentColor" stroke-width="2.500"><rect x="9" y="1" width="7" height="13" rx="3.500" fill="currentColor"/><path d="M4 10q0 8 8 8t8-8M12 18v5M8 23h9"/></svg></button>
                <button aria-label="键盘"><svg class="size-6" viewBox="0 0 24 24" fill="none" stroke="currentColor" stroke-width="2.500"><rect x="1" y="3" width="22" height="18" rx="2"/><path d="M4 8h16M4 12h16" stroke-dasharray="2.500 1.500"/><path d="M6 17h12"/></svg></button>
                <button aria-label="账户"><svg class="size-6" viewBox="0 0 24 24" fill="#b9bdd4"><circle cx="8" cy="6" r="5"/><path d="M0 22q0-10 8-10 3 0 4 2v8z"/><path d="M11 14h13v9H11z"/><path d="M13 17h2v4M18 17h4v4h-4M18 19h4" stroke="#fff" fill="none"/></svg></button>
                <button aria-label="皮肤"><svg class="size-6" viewBox="0 0 24 24" fill="currentColor"><path d="M7 2q5 4 10 0l6 5-3 5-2-1v12H6V11l-2 1-3-5z"/></svg></button>
                <button aria-label="工具箱"><svg class="size-5" viewBox="0 0 20 20" fill="currentColor"><path d="M0 0h9v9H0zM0 11h9v9H0zM11 11h9v9h-9z"/><rect x="12" y="1" width="7" height="7" rx="1" fill="none" stroke="currentColor" stroke-width="2"/></svg></button>
            </div>
        </div>
    </main>

    <!-- Pestañas de presentación -->
    <div class="flex shrink-0 h-[43px] border-t-2 border-[#585858]">
        <div class="flex h-7 pl-2.5">
            <a href="#" class="w-20 text-center font-bold bg-linear-to-b from-[#4c4c4c] to-[#858585] [clip-path:polygon(0_0,100%_0,90%_90%,84%_100%,14%_100%,9%_90%)]">模型</a>
            <a href="#" class="w-20 -ml-1 text-center text-[#b4b4b4] bg-[#5a5a5a] [clip-path:polygon(0_0,100%_0,90%_90%,84%_100%,14%_100%,9%_90%)]">布局1</a>
            <a href="#" class="w-20 ml-0.5 text-center text-[#b4b4b4] bg-[#5a5a5a] [clip-path:polygon(0_0,100%_0,90%_90%,84%_100%,14%_100%,9%_90%)]">布局2</a>
            <button aria-label="新建布局" class="flex items-center justify-center w-[34px] h-6 ml-2 rounded-tl-2xl rounded-br-2xl bg-[#5a5a5a]"><svg class="size-3" viewBox="0 0 12 12"><path d="M6 0v12M0 6h12" stroke="#bbb" stroke-width="3"/></svg></button>
        </div>
        <div class="ml-auto px-2 border-2 border-r-0 border-[#757575] bg-[#4c4c4c] leading-9">DIMSCALE:&lt;1:1&gt; DIMSTY:&lt;ISO-25&gt; STYLE:&lt;Standard&gt;</div>
    </div>

    <!-- Barra de estado -->
    <footer class="flex shrink-0 h-10 pl-[98px] gap-[3px] text-[#f0f0f0]">
        <div class="w-[275px] pr-1.5 border-2 border-b-0 border-[#757575] bg-[#4c4c4c] text-right text-[17px] leading-10 font-medium">4203.2503, 1288.9765, 0.0000</div>
        <button class="w-11 border-2 border-b-0 border-[#757575] bg-[#4c4c4c] font-medium">模型</button>
        <div class="flex w-[97px] pt-0.5 border-2 border-b-0 border-[#757575] bg-[#4c4c4c] *:flex *:items-center *:justify-center">
            <button aria-label="栅格" class="w-9 bg-[#5b8dc8]"><svg class="size-6" viewBox="0 0 24 24" stroke="#fff" stroke-width="1.500"><path d="M6 1v22M12 1v22M18 1v22M0 6h24M0 12h24M0 18h24"/></svg></button>
            <button aria-label="捕捉" class="w-9"><svg class="size-5" viewBox="0 0 20 20" stroke="#e4e4e4" stroke-width="3" stroke-dasharray="3 5"><path d="M1 2h19M1 10h19M1 18h19"/></svg></button>
            <button aria-label="捕捉选项" class="w-5"><svg class="w-2.5 h-2"><use href="#down"/></svg></button>
        </div>
        <div class="flex w-[500px] pt-0.5 border-2 border-b-0 border-[#757575] bg-[#4c4c4c] *:flex *:items-center *:justify-center">
            <button aria-label="推断约束" class="w-9 border-r border-[#757575]"><svg class="size-6" viewBox="0 0 24 24" fill="none" stroke="#ddd" stroke-width="1.500"><path d="M12 1h11v8H12zM12 9v7"/><path d="M0 15h12v9H0z" fill="#ddd" stroke="none"/></svg></button>
            <button aria-label="动态输入" class="w-[38px] bg-[#5b8dc8]"><svg class="size-6" viewBox="0 0 24 24" fill="none" stroke="#fff" stroke-width="1.500"><path d="M6 3v12M0 9h12"/><path d="M10 16h13v6H10z"/><path d="M13 16h10v6H13z" fill="#fff"/></svg></button>
            <button aria-label="正交" class="w-9"><svg class="size-6" viewBox="0 0 24 24" fill="none" stroke="#ddd" stroke-width="1.500"><path d="M1 0v23h23M1 16h7v7"/></svg></button>
            <button aria-label="极轴追踪" class="w-9 bg-[#5b8dc8]"><svg class="size-6" viewBox="0 0 24 24" fill="none" stroke="#fff" stroke-width="1.500"><circle cx="10" cy="13" r="9"/><path d="M10 13h14M10 13L20 1M16 8v9"/></svg></button>
            <button aria-label="极轴选项" class="w-6"><svg class="w-2.5 h-2"><use href="#down"/></svg></button>
            <button aria-label="等轴测" class="w-[34px]"><svg class="size-6" viewBox="0 0 24 24" fill="none" stroke-width="1.500"><path d="M2 2l18 20" stroke="#c25b5b"/><path d="M12 0v24" stroke="#69bb8a"/><path d="M10 10h4v4h-4z" stroke="#eee" fill="#444"/></svg></button>
            <button aria-label="等轴测选项" class="w-6"><svg class="w-2.5 h-2"><use href="#down"/></svg></button>
            <button aria-label="对象捕捉追踪" class="w-9 bg-[#5b8dc8]"><svg class="size-6" viewBox="0 0 24 24" fill="none" stroke="#fff" stroke-width="1.500"><path d="M23 22H1L19 3"/><path d="M8 11h4v4H8z" fill="#fff"/></svg></button>
            <button aria-label="对象捕捉" class="w-9 bg-[#5b8dc8] border-l border-[#757575]"><svg class="size-6" viewBox="0 0 24 24" fill="none" stroke="#fff" stroke-width="1.500"><path d="M7 4h16v19H3V8M1 1h6v6H1z"/></svg></button>
            <button aria-label="捕捉设置" class="w-6"><svg class="w-2.5 h-2"><use href="#down"/></svg></button>
            <button aria-label="线宽" class="w-9 bg-[#5b8dc8]"><svg class="size-6" viewBox="0 0 24 24" stroke="#fff"><path d="M0 4h12M0 12h12M0 20h12" stroke-width="4"/><path d="M12 4h12M12 12h12M12 20h12" stroke-width="1.500"/></svg></button>
            <button aria-label="透明度" class="w-[38px] bg-[#5b8dc8] border-l-2 border-[#757575]"><svg class="size-6" viewBox="0 0 24 24"><path d="M1 1h22v22H1z" fill="none" stroke="#fff" stroke-width="1.500"/><path d="M2 2h5v5H2zM12 2h5v5h-5zM7 7h5v5H7zM17 7h5v5h-5zM2 12h5v5H2zM12 12h5v5h-5zM7 17h5v5H7zM17 17h5v5h-5z" fill="#fff"/></svg></button>
            <button aria-label="选择循环" class="w-[38px]"><svg class="size-6" viewBox="0 0 24 24" fill="none" stroke="#ddd" stroke-width="1.500"><path d="M4 0v8M0 4h8M6 14V7h14"/><path d="M9 10h15v14H9z" fill="#72c796" stroke="none"/></svg></button>
            <button aria-label="三维对象捕捉" class="w-[38px] border-l border-[#757575]"><svg class="size-6" viewBox="0 0 24 24" fill="none" stroke="#ddd" stroke-width="1.500"><path d="M3 15V6l5-5h15v13l-6 7H9M3 6h14l6-5M17 6v15"/><path d="M1 17h6v6H1z" stroke="#e5905f"/></svg></button>
            <button aria-label="三维选项" class="w-[22px]"><svg class="w-2.5 h-2"><use href="#down"/></svg></button>
        </div>
        <div class="flex w-[156px] pt-0.5 border-2 border-b-0 border-[#757575] bg-[#4c4c4c] *:flex *:items-center *:justify-center">
            <button aria-label="动态 UCS" class="w-9 bg-[#5b8dc8]"><svg class="size-6" viewBox="0 0 24 24" fill="#fff"><path d="M4 3v17h17" fill="none" stroke="#fff" stroke-width="1.500"/><path d="M1 5l3-5 3 5zM19 17l5 3-5 3zM14 5l-6 8h4l-1 5 6-8h-4z"/></svg></button>
            <button aria-label="选择过滤" class="w-9"><svg class="size-6" viewBox="0 0 24 24" fill="none" stroke="#ddd"><path d="M3 4h16v16H3zM3 4l5-3h15v16l-4 4" stroke-dasharray="5 1"/><path d="M0 2h5v5H0zM16 2h5v5h-5zM0 18h5v5H0zM16 18h5v5h-5z" fill="#5cb0f5" stroke="none"/></svg></button>
            <button aria-label="过滤选项" class="w-[22px]"><svg class="w-2.5 h-2"><use href="#down"/></svg></button>
            <button aria-label="小控件" class="w-9 bg-[#5b8dc8]"><svg class="size-6" viewBox="0 0 24 24" fill="none" stroke="#fff" stroke-width="1.500"><path d="M10 1h4v4h-4zM1 17h4v4H1zM19 17h4v4h-4zM10 11h4v4h-4zM12 5v6M10 14l-5 4M14 14l5 4M9 4Q3 8 3 16M15 4q6 4 6 12M5 20l7 3 7-3"/></svg></button>
            <button aria-label="小控件选项" class="w-[22px]"><svg class="w-2.5 h-2"><use href="#down"/></svg></button>
        </div>
        <div class="flex w-[217px] pt-0.5 border-2 border-b-0 border-[#757575] bg-[#4c4c4c] *:flex *:items-center *:justify-center">
            <button aria-label="注释可见性" class="w-9 bg-[#5b8dc8]"><svg class="size-6" viewBox="0 0 24 24"><path d="M10 0q3 6 3 10 1 5 7 13l-7-3-3-3-3 3-7 3q6-8 7-13 0-4 3-10z" fill="#fff"/><circle cx="19" cy="5" r="4" fill="none" stroke="#fff"/></svg></button>
            <button aria-label="自动缩放" class="w-[34px]"><svg class="size-6" viewBox="0 0 24 24" fill="#ddd"><path d="M10 0q3 6 3 10 1 5 7 13l-7-3-3-3-3 3-7 3q6-8 7-13 0-4 3-10z"/><path d="M21 0l-6 7h3l-1 5 6-7h-3z"/></svg></button>
            <button aria-label="注释比例图标" class="w-[34px]"><svg class="size-6" viewBox="0 0 24 24" fill="#ddd"><path d="M12 0q3 6 3 10 1 5 7 13l-7-3-3-3-3 3-7 3q6-8 7-13 0-4 3-10z"/></svg></button>
            <button class="flex-1 gap-1 text-[17px]">1:1 / 100%<svg class="w-2.5 h-2"><use href="#down"/></svg></button>
        </div>
        <div class="flex w-[99px] pt-0.5 border-2 border-b-0 border-[#757575] bg-[#4c4c4c] *:flex *:items-center *:justify-center">
            <button aria-label="切换工作空间" class="w-[34px]"><svg class="size-6" viewBox="0 0 24 24" fill="none" stroke="#ddd"><circle cx="12" cy="12" r="6.500" stroke-width="4"/><circle cx="12" cy="12" r="10" stroke-width="4" stroke-dasharray="3.900 3.950"/></svg></button>
            <button aria-label="工作空间选项" class="w-6 border-r border-[#757575]"><svg class="w-2.5 h-2"><use href="#down"/></svg></button>
            <button aria-label="注释监视器" class="flex-1"><svg class="size-6" viewBox="0 0 24 24" stroke="#ddd" stroke-width="2.500"><path d="M12 0v24M0 12h24"/></svg></button>
        </div>
        <div class="flex w-[187px] pt-0.5 border-2 border-b-0 border-[#757575] bg-[#4c4c4c] *:flex *:items-center *:justify-center">
            <button class="flex-1 pl-2.5 pr-1.5 border-r border-[#757575]"><svg class="w-3 h-6 mr-5" viewBox="0 0 12 24"><path d="M0 0h12v3H6v2h3v2H6v2h3v2H6v2h6v3H6v2h3v2H6v2h6v2H0z" fill="#ddd"/></svg>小数<svg class="w-2.5 h-2 ml-auto"><use href="#down"/></svg></button>
            <button aria-label="快捷特性" class="w-[38px]"><svg class="size-6" viewBox="0 0 24 24" fill="none" stroke="#ddd" stroke-width="1.500"><path d="M3 1h18v22H3zM3 4h18M7 9h3M7 14h3M7 19h3M12 9h6M12 14h6M12 19h6"/></svg></button>
        </div>
        <div class="flex w-[98px] pt-0.5 border-2 border-b-0 border-[#757575] bg-[#4c4c4c] *:flex *:items-center *:justify-center">
            <button aria-label="锁定界面" class="w-[34px]"><svg class="size-6" viewBox="0 0 24 24" fill="none" stroke="#ddd" stroke-width="1.500"><path d="M9 19H1V1h20v7M1 4h20"/><path d="M11 15h10v9H11z" fill="#ddd" stroke="none"/><path d="M18 15v-3q3-3 5 0v3"/></svg></button>
            <button aria-label="锁定选项" class="w-6 border-r border-[#757575]"><svg class="w-2.5 h-2"><use href="#down"/></svg></button>
            <button aria-label="隔离对象" class="flex-1"><svg class="size-6" viewBox="0 0 24 24" fill="none" stroke="#ddd"><path d="M1 1h9v9H1zM5 23l5-8 5 8z"/><circle cx="18" cy="11" r="5"/></svg></button>
        </div>
        <div class="flex w-[39px] pt-0.5 border-2 border-b-0 border-[#757575] bg-[#4c4c4c]">
            <button aria-label="图形性能" class="flex flex-1 items-center justify-center bg-[#5b8dc8]"><svg class="size-6" viewBox="0 0 24 24" fill="#79a5d8" stroke="#dfe9f5" stroke-width="1.500"><circle cx="12" cy="12" r="11"/><path d="M11 18l1-5 7-8-4 9z" fill="#fff"/></svg></button>
        </div>
        <div class="w-[5px] border-2 border-b-0 border-[#757575]"></div>
        <div class="flex flex-1 pt-0.5 border-2 border-b-0 border-r-0 border-[#757575] bg-[#4c4c4c] *:flex *:items-center *:justify-center">
            <button aria-label="全屏显示" class="w-[34px]"><svg class="size-6" viewBox="0 0 24 24" fill="none" stroke="#ddd" stroke-width="1.500"><path d="M1 3h22v17H1zM14 10l5-5M15 5h5v4M9 12l-5 5M4 13v4h4"/></svg></button>
            <button aria-label="自定义" class="flex-1"><svg class="size-6" viewBox="0 0 24 24" stroke="#ddd" stroke-width="3"><path d="M0 3h24M0 12h24M0 21h24"/></svg></button>
        </div>
    </footer>
</body>

</html>
